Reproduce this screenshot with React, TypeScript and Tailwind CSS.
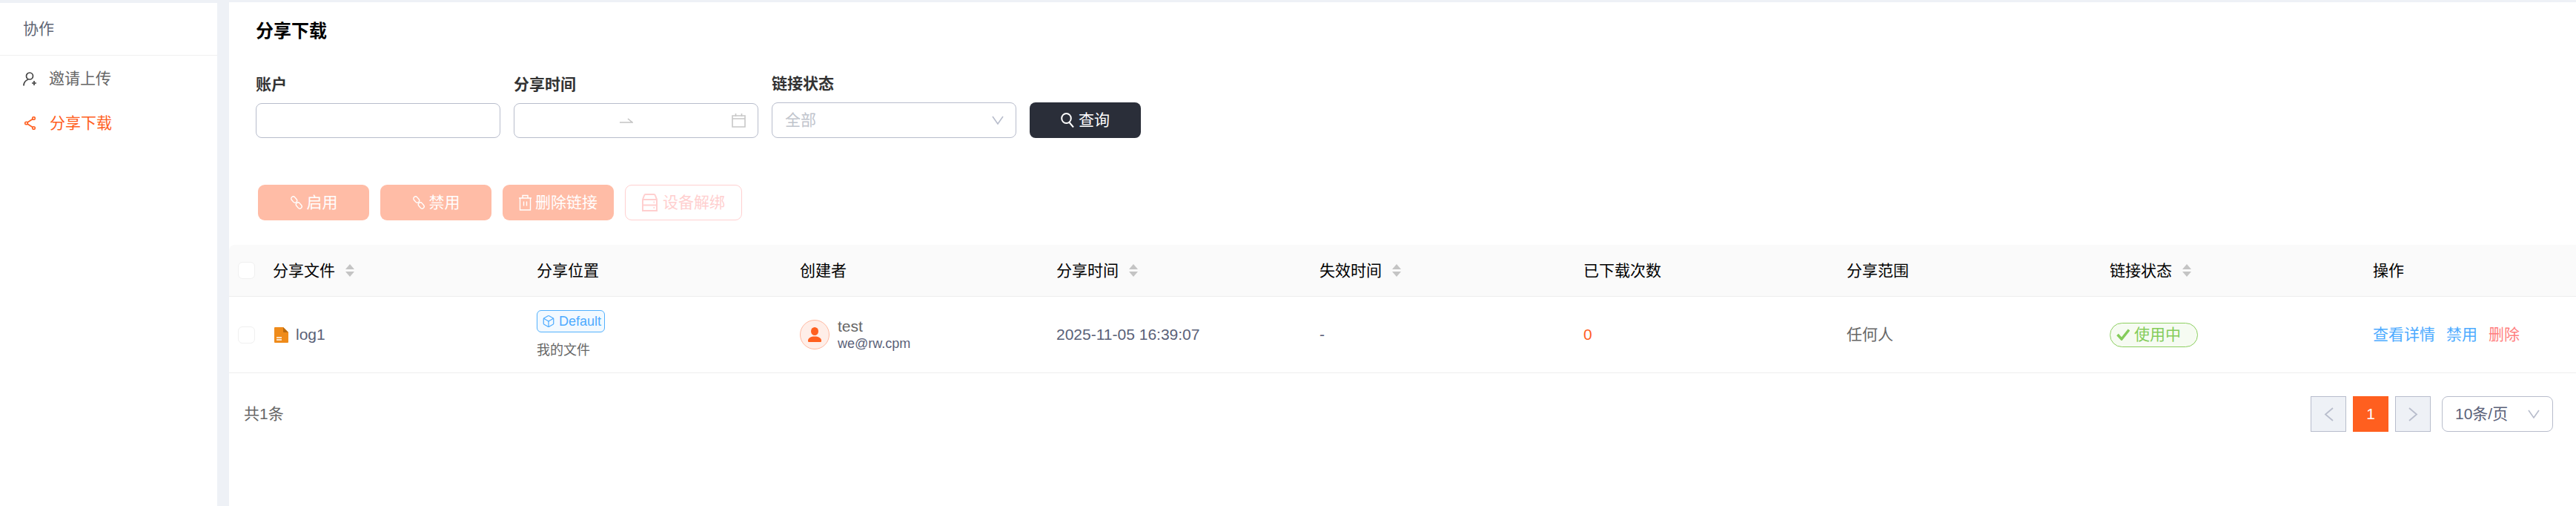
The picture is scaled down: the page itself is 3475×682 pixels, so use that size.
import { Box } from "lucide-react"

const font = "[font-family:'Liberation_Sans','Noto_Sans_CJK_SC',sans-serif]"
const columns = "grid-cols-[47px_356px_355px_346px_355px_356px_355px_355px_355px_286px]"

function Sorter() {
    return (
        <svg width="12" height="19" viewBox="0 0 12 19" className="ml-[14px] shrink-0">
            <path d="M6 1 L12 8 H0 Z" fill="#c4c4c4" />
            <path d="M6 18 L12 11 H0 Z" fill="#c4c4c4" />
        </svg>
    )
}

function Head({ title, sort }: { title: string; sort?: boolean }) {
    return (
        <div className="flex items-center px-3 text-black">
            <span>{title}</span>
            {sort && <Sorter />}
        </div>
    )
}

function Field({ label, children }: { label: string; children: React.ReactNode }) {
    return (
        <div className="flex w-[330px] flex-col">
            <div className="h-[38px] leading-[26px] font-bold text-[#333]">{label}</div>
            {children}
        </div>
    )
}

function LinkIcon() {
    return (
        <svg width="18" height="20" viewBox="0 0 18 20" fill="none" stroke="currentColor" strokeWidth="1.4">
            <rect x="3" y="1.500" width="5.500" height="9" rx="2.750" transform="rotate(-40 5.750 6)" />
            <rect x="9.500" y="9.500" width="5.500" height="9" rx="2.750" transform="rotate(-40 12.250 14)" />
        </svg>
    )
}

function TrashIcon() {
    return (
        <svg width="17" height="22" viewBox="0 0 17 22" fill="none" stroke="currentColor" strokeWidth="1.4">
            <path d="M0 5h17M5 5V1.500h7V5" />
            <path d="M1.500 5v16h14V5" />
            <path d="M6.500 9.500v6M10.500 9.500v6" />
        </svg>
    )
}

function DiskIcon() {
    return (
        <svg width="21" height="24" viewBox="0 0 21 24" fill="none" stroke="currentColor" strokeWidth="2">
            <path d="M1 8 L3 2.500 Q3.500 1 5 1 H16 Q17.500 1 18 2.500 L20 8 V23 H1 Z" />
            <path d="M1 8h19M1 15.500h19" />
            <path d="M15.500 11.500h1.500M15.500 19h1.500" />
        </svg>
    )
}

function Chevron({ color }: { color: string }) {
    return (
        <svg width="16" height="12" viewBox="0 0 16 12" fill="none" stroke={color} strokeWidth="1.6">
            <path d="M1 1 L8 11 L15 1" />
        </svg>
    )
}

function ActionButton({ icon, label }: { icon: React.ReactNode; label: string }) {
    return (
        <button className="flex h-[48px] w-[150px] items-center justify-center gap-[5px] rounded-[9px] bg-[#ffbca6] text-white">
            {icon}
            {label}
        </button>
    )
}

export default function App() {
    return (
        <div className={"flex h-[682px] w-[3475px] overflow-hidden bg-[#eef1f6] text-[21px] " + font}>
            <aside className="mt-1 w-[293px] shrink-0 bg-white">
                <div className="flex h-[71px] items-center border-b border-[#f0f0f0] pl-[31px] text-[#5f6675]">协作</div>
                <nav className="pt-[1px]">
                    <div className="flex h-[60px] items-center gap-[17px] pl-[31px] text-[#666]">
                        <svg width="18" height="19" viewBox="0 0 18 19" fill="none" stroke="#444" strokeWidth="1.7">
                            <circle cx="9" cy="5.500" r="4.500" />
                            <path d="M1 18.500c0-4 2.500-7 6-8.500" />
                            <path d="M12 15h6M15 12v6" />
                        </svg>
                        邀请上传
                    </div>
                    <div className="flex h-[60px] items-center gap-[19px] pl-[33px] text-[#ff5f1f]">
                        <svg width="15" height="18" viewBox="0 0 15 18" fill="none" stroke="currentColor" strokeWidth="1.6">
                            <circle cx="12.500" cy="2.500" r="1.800" />
                            <circle cx="2.500" cy="9" r="1.800" />
                            <circle cx="12.500" cy="15.500" r="1.800" />
                            <path d="M11 3.500L4 8M4 10l7 4.500" />
                        </svg>
                        分享下载
                    </div>
                </nav>
            </aside>
            <main className="mt-[3px] ml-4 flex-1 bg-white">
                <div className="px-9 pt-[27px]">
                    <h1 className="text-[24px] leading-6 font-bold text-black">分享下载</h1>
                    <div className="mt-[46px] flex items-end gap-[18px]">
                        <Field label="账户">
                            <div className="h-[47px] rounded-lg border-[1.5px] border-[#b8bdcc]" />
                        </Field>
                        <Field label="分享时间">
                            <div className="flex h-[47px] items-center rounded-lg border-[1.5px] border-[#b8bdcc]">
                                <svg width="18" height="7" viewBox="0 0 18 7" fill="none" stroke="#c4c4c4" strokeWidth="1.6" className="ml-[142px]">
                                    <path d="M0 6h17L11 1" />
                                </svg>
                                <svg width="19" height="19" viewBox="0 0 19 19" fill="none" stroke="#c8c8c8" strokeWidth="1.6" className="mr-[16px] ml-auto">
                                    <path d="M1 3h17v15H1zM1 7h17" />
                                    <path d="M5.500 0v4M13.500 0v4" />
                                </svg>
                            </div>
                        </Field>
                        <Field label="链接状态">
                            <div className="flex h-[48px] items-center justify-between rounded-lg border-[1.5px] border-[#b8bdcc] pr-4 pl-[17px] text-[#c0c4cc]">
                                全部
                                <Chevron color="#b8bdcc" />
                            </div>
                        </Field>
                        <button className="flex h-[48px] w-[150px] items-center justify-center gap-[6px] rounded-lg bg-[#2a2e39] text-white">
                            <svg width="18" height="20" viewBox="0 0 18 20" fill="none" stroke="currentColor" strokeWidth="2">
                                <ellipse cx="7.500" cy="7.500" rx="6.300" ry="6.500" />
                                <path d="M11.500 13 L17 19.500" />
                            </svg>
                            查询
                        </button>
                    </div>
                    <div className="mt-[63px] ml-[3px] flex gap-[15px]">
                        <ActionButton icon={<LinkIcon />} label="启用" />
                        <ActionButton icon={<LinkIcon />} label="禁用" />
                        <ActionButton icon={<TrashIcon />} label="删除链接" />
                        <button className="flex h-[48px] w-[158px] items-center justify-center gap-[7px] rounded-[9px] border-[1.5px] border-[#ffd0d0] text-[#ffcfcf]">
                            <DiskIcon />
                            设备解绑
                        </button>
                    </div>
                </div>
                <div className="mt-[33px]">
                    <div className={"grid h-[70px] rounded-tl-lg border-b-[1.5px] border-[#eee] bg-[#fafafa] " + columns}>
                        <div className="flex items-center pl-3">
                            <div className="h-[23px] w-[23px] rounded-md border border-[#f0f0f0] bg-white" />
                        </div>
                        <Head title="分享文件" sort />
                        <Head title="分享位置" />
                        <Head title="创建者" />
                        <Head title="分享时间" sort />
                        <Head title="失效时间" sort />
                        <Head title="已下载次数" />
                        <Head title="分享范围" />
                        <Head title="链接状态" sort />
                        <Head title="操作" />
                    </div>
                    <div className={"grid h-[103px] items-center border-b-[1.5px] border-[#eee] text-[#5a6178] " + columns}>
                        <div className="pl-3">
                            <div className="h-[23px] w-[23px] rounded-md border border-[#f0f0f0] bg-white" />
                        </div>
                        <div className="flex items-center gap-[10px] px-3">
                            <svg width="19" height="21" viewBox="0 0 19 21" className="ml-[2px]">
                                <path d="M1 0h11l7 7v13a1 1 0 0 1-1 1H1a1 1 0 0 1-1-1V1a1 1 0 0 1 1-1z" fill="#ef8b1a" />
                                <path d="M12 0l7 7h-6a1 1 0 0 1-1-1z" fill="#b86a10" />
                                <path d="M3 14h7M3 17h7" stroke="#fff" strokeWidth="1.3" />
                            </svg>
                            log1
                        </div>
                        <div className="flex flex-col items-start px-3">
                            <div className="flex h-[30px] w-[92px] items-center gap-[5px] rounded-md border-[1.5px] border-[#53b1fd] bg-[#f2f9ff] pl-[6px] text-[18px] text-[#4dabff]">
                                <Box size={18} strokeWidth={1.6} />
                                Default
                            </div>
                            <div className="mt-[12px] text-[18px] leading-[24px] text-[#666]">我的文件</div>
                        </div>
                        <div className="flex items-center gap-[11px] px-3">
                            <div className="flex h-10 w-10 items-center justify-center rounded-full border-[1.5px] border-[#ffb9a1] bg-[#ffeee8]">
                                <svg width="18" height="20" viewBox="0 0 18 20" fill="#ff5f1f">
                                    <ellipse cx="9" cy="5.500" rx="5" ry="5.500" />
                                    <path d="M1 20c-1 0-1-1-1-2 0-3.500 4-5.500 9-5.500s9 2 9 5.500c0 1 0 2-1 2z" />
                                </svg>
                            </div>
                            <div className="flex flex-col">
                                <span className="text-[21px] leading-6 text-[#666]">test</span>
                                <span className="text-[18px] leading-[22px]">we@rw.cpm</span>
                            </div>
                        </div>
                        <div className="px-3">2025-11-05 16:39:07</div>
                        <div className="px-3">-</div>
                        <div className="px-3 text-[#ff5f1f]">0</div>
                        <div className="px-3 text-[#666]">任何人</div>
                        <div className="px-3">
                            <div className="flex h-[33px] w-[119px] items-center gap-[6px] rounded-full border-[1.5px] border-[#8ccf5f] bg-[#f6fbf2] pl-2 text-[#84cc5a]">
                                <svg width="18" height="16" viewBox="0 0 18 16" fill="none" stroke="currentColor" strokeWidth="3.500">
                                    <path d="M1.500 8 L7 14 L17 1.500" />
                                </svg>
                                使用中
                            </div>
                        </div>
                        <div className="flex gap-[15px] px-3 text-[#4dabff]">
                            <span>查看详情</span>
                            <span>禁用</span>
                            <span className="text-[#ff8080]">删除</span>
                        </div>
                    </div>
                    <div className="flex items-center justify-between pt-[31px] pr-[31px] pl-5">
                        <span className="text-[#666]">共1条</span>
                        <div className="flex items-center gap-[9px]">
                            <div className="flex h-[48px] w-[48px] items-center justify-center border-[1.5px] border-[#b8bdcc] bg-[#eef1f6]">
                                <svg width="13" height="19" viewBox="0 0 13 19" fill="none" stroke="#b8bdcc" strokeWidth="1.8">
                                    <path d="M12 1 L2 9.500 L12 18" />
                                </svg>
                            </div>
                            <div className="flex h-[48px] w-[48px] items-center justify-center bg-[#ff5f1f] text-white">1</div>
                            <div className="flex h-[48px] w-[48px] items-center justify-center border-[1.5px] border-[#b8bdcc] bg-[#eef1f6]">
                                <svg width="13" height="19" viewBox="0 0 13 19" fill="none" stroke="#b8bdcc" strokeWidth="1.8">
                                    <path d="M1 1 L11 9.500 L1 18" />
                                </svg>
                            </div>
                            <div className="ml-[6px] flex h-[48px] w-[150px] items-center justify-between rounded-lg border-[1.5px] border-[#b8bdcc] pr-[17px] pl-[17px] text-[#5a6178]">
                                10条/页
                                <Chevron color="#b8bdcc" />
                            </div>
                        </div>
                    </div>
                </div>
            </main>
        </div>
    )
}
